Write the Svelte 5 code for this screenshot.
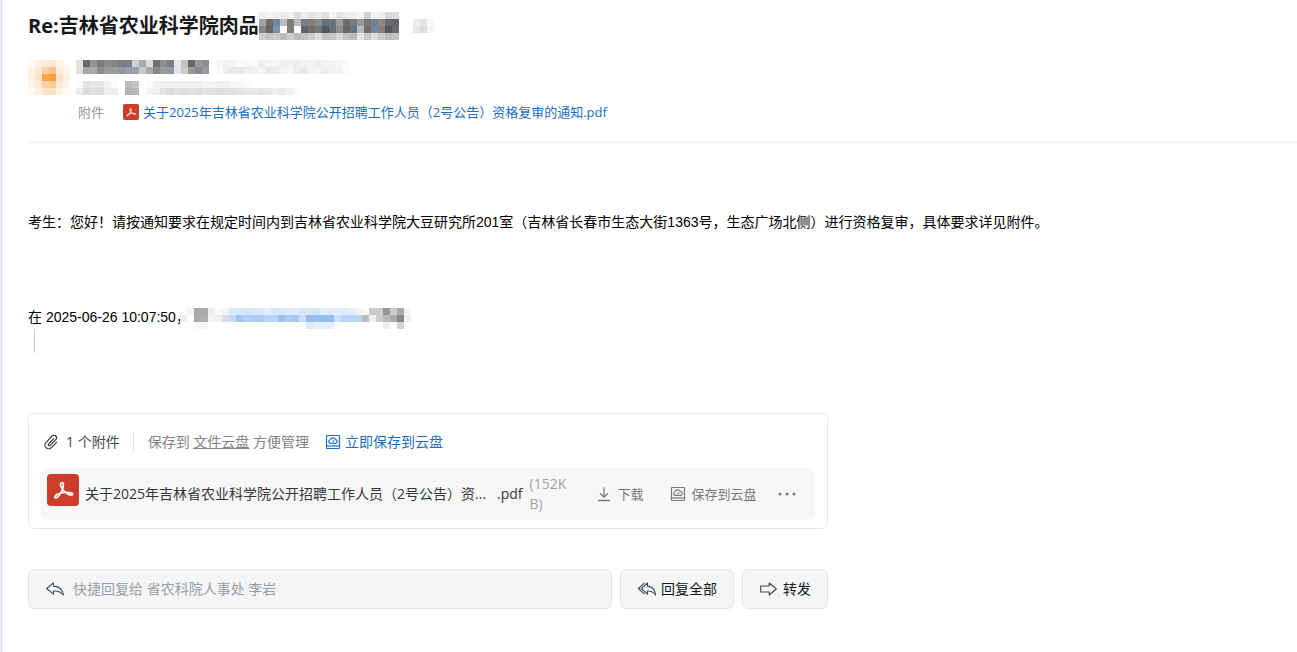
<script>
  let reply = ''

  const fileName = '关于2025年吉林省农业科学院公开招聘工作人员（2号公告）资格复审的通知'
  // keeps the list row on one line
  const shortName = fileName.slice(0, 30) + '...'

  // masked text, one colour for each block, "-" is an empty block
  const masks = {
    title: [
      'eee f4f4f4 eee eaeaea f2f2f2 ddd eee e4e4e4 eaeaea ddd f4f4f4 e4e4e4 eee eee f4f4f4 d4d4d4 f4f4f4 eee d8d8d8 ddd - - - - -',
      'a2a2a2 706b66 7089a0 bbb 7c7c7c bbb 7a7c80 857d74 8b8b8b 65717d 6b7178 999 6f6b69 7a7b7f 9a9a9a 777 6d8094 8c8880 686c72 62666a - - eee e4e4e4 f8f8f8',
      '888 686562 7a92aa fff 7f7f7f fff 5b6470 756d64 6e7780 505860 6f6e6e 8e8e8e 696663 5d7690 bbb 756f6b 73879c 857e75 4e565e 6d6d6d - - e8e8e8 ddd f4f4f4',
      'ccc c4c4c4 c8c8c8 bbb ccc bbb c4c4c4 ccc ddd c0c0c0 c6c6c6 d8d8d8 c4c4c4 bbb e4e4e4 c8c8c8 ddd ccc bbb c4c4c4 - - - - -',
    ],
    avatar: [
      'fffaf5 fff0e2 ffe9d2 ffe9d2 fff3e6 fffcf9',
      'fff4e8 ffe8d2 fdd0a2 fdc48a ffecd8 fff5ea',
      'fff0e0 ffe3c8 fba84d fb9f3c ffe2c6 fff0e0',
      'fff4e8 ffe8d2 fdd2a4 fdcb96 ffecd8 fff5ea',
      'fffaf5 fff0e2 ffe3c4 ffe3c4 fff3e6 fffcf9',
    ],
    sender: [
      'e8e2dc 686c6c 939393 7c7c7c 8b8b8b 858585 7b7e86 787f8f c8d0d8 aaa e2ddd0 6f7274 8d8d8d 7c7c80 e0e8ee ccc0b8 626866 9a9a9a 8d8d90 - f6f6f6 f2f2f2 f4f4f4 fafafa f7f7f7 fafafa eee f4f4f4 f7f7f7 f0f0f0 f2f2f2 eee f2f2f2 f4f4f4 eee f2f2f2 f4f4f4 f7f7f7 fafafa',
      'e8e0d8 a4a4aa aaa 8b8b8b 999 9c9c9c 8d94a4 9b9bab 9aa4ae c8c8d0 aaa 888 999 9294a8 dde4ee ccc 999 8a8a8e 9a9a9e - fafafa eee e8e8e8 e8e8e8 f0f0f0 f2f2f2 f4f4f4 e8e8e8 eee f4f4f4 f7f7f7 eee e8e8e8 f2f2f2 f7f7f7 eee f4f4f4 f2f2f2 fafafa',
    ],
    recipient: [
      'fafafa e4e4e4 e8e8e8 e4e4e4 f4f4f4 fafafa - bbb c4c4c4 - fafafa f2f2f2 f0f0f0 f2f2f2 f0f0f0 f0f0f0 f2f2f2 f0f0f0 f4f4f4 f4f4f4 f2f2f2 f2f2f2 f7f7f7 f7f7f7 fafafa',
      'eee ddd e2e2e2 ddd eee eee - b4b4b4 b8b8b8 - f4f4f4 f2f2f2 e4e4e4 ddd e2e2e2 ddd e2e2e2 ddd e4e4e4 e4e4e4 ddd e2e2e2 e0e0e0 e4e4e4 e8e8e8 e8e8e8 e4e4e4 e8e8e8 eee e8e8e8 f2f2f2 fafafa',
    ],
    quoted: [
      '- f4f4f4 a8a8a8 aaa eee fafafa eef5fd d8e8fb d8e8fb d4e5fa d8e8fb d8e8fb e2effc d4e5fa d8e8fb ddebfc ddebfc d4e5fa d8e8fb d4e5fa e2effc ddebfc e2effc ddebfc e2effc eef5fd fafafa ccc ccc 999 ccc aaa f4f4f4',
      'eee - aaa b0b0b0 f4f4f4 eee ddd c4dcf8 a0c6f2 b0d0f5 acccf4 acccf4 b8d5f7 b8d5f7 9cc2f0 acccf4 a4c8f2 ccdffa 94bdee 98c0f0 94bdee 94bdee ccdffa b8d5f7 b8d5f7 b8d5f7 bbb eee ccc bbb aaa 888 eee',
      '- - f7f7f7 f7f7f7 - - - - - - - - - - - - - - d8e8fb e2effc e2effc e2effc - - - - - - - eee - d4d4d4 -',
    ],
  }
</script>

{#snippet mosaic(rows)}
  <svg
    class="mosaic"
    width={Math.max(...rows.map((r) => r.split(' ').length)) * 7}
    height={rows.length * 7}
    shape-rendering="crispEdges"
    aria-hidden="true"
  >
    {#each rows as row, y}
      {#each row.split(' ') as color, x}
        {#if color !== '-'}
          <rect x={x * 7} y={y * 7} width="7" height="7" fill={'#' + color} />
        {/if}
      {/each}
    {/each}
  </svg>
{/snippet}

{#snippet pdfIcon(size)}
  <svg class="pdf-icon" width={size} height={size} viewBox="0 0 32 32" aria-hidden="true">
    <rect width="32" height="32" rx="4" fill="#cc3d2b" />
    <path
      d="M14.600 8.800c1.800-.5 2.200 1.400 1.500 4.200-.9 3.600-3.400 8.100-5.700 10.200-1.400 1.300-2.900.7-2.400-.7.8-2.100 5.400-3.700 9.600-4 3.300-.3 7.400.1 8 1.300.5 1.200-1.500 1.700-3.400.8-3.400-1.400-7.300-5.300-8.500-8.800-.5-1.500-.3-2.700.9-3z"
      fill="none"
      stroke="#fff"
      stroke-width="1.700"
      stroke-linejoin="round"
    />
  </svg>
{/snippet}

{#snippet diskIcon()}
  <svg width="16" height="16" viewBox="0 0 16 16" fill="none" stroke="currentColor" stroke-width="1.200" aria-hidden="true">
    <rect x="1.500" y="1.500" width="13" height="13" rx=".8" />
    <path d="M1.500 12h13" />
    <path d="M5.300 9.300a1.800 1.800 0 0 1-.3-3.500 3.100 3.100 0 0 1 5.700-.2 1.900 1.900 0 0 1 .1 3.700z" />
    <path d="M7.600 7.900l1.600-1.600" />
  </svg>
{/snippet}

<main class="mail">
  <header class="mail-header">
    <h1 class="subject">Re:吉林省农业科学院肉品{@render mosaic(masks.title)}</h1>
    <div class="meta">
      {@render mosaic(masks.avatar)}
      <div class="meta-info">
        {@render mosaic(masks.sender)}
        {@render mosaic(masks.recipient)}
        <div class="meta-attach">
          <span class="meta-label">附件</span>
          <a href="#attachments" class="file-link">{@render pdfIcon(16)}{fileName}.pdf</a>
        </div>
      </div>
    </div>
  </header>

  <article class="content">
    <p>考生：您好！请按通知要求在规定时间内到吉林省农业科学院大豆研究所201室（吉林省长春市生态大街1363号，生态广场北侧）进行资格复审，具体要求详见附件。</p>
    <p class="quote-from">在 2025-06-26 10:07:50，{@render mosaic(masks.quoted)}</p>
    <blockquote></blockquote>
  </article>

  <section class="attachments" id="attachments">
    <div class="attach-head">
      <svg class="clip" width="16" height="16" viewBox="0 0 16 16" fill="none" stroke="currentColor" stroke-width="1.200" stroke-linecap="round" aria-hidden="true">
        <path d="M10.800 4.600L5.600 9.900a1 1 0 0 0 1.500 1.500l5.700-5.800a2.500 2.500 0 0 0-3.600-3.600L3 8.300a3.800 3.800 0 0 0 5.400 5.400l5.200-5.300" />
      </svg>
      <span class="count">1 个附件</span>
      <span class="tip">保存到 <a href="#disk">文件云盘</a> 方便管理</span>
      <button class="save-now">{@render diskIcon()}立即保存到云盘</button>
    </div>
    <div class="attach-item">
      {@render pdfIcon(32)}
      <span class="name" title={fileName}>{shortName}</span>
      <span class="ext">.pdf</span>
      <span class="size">(152KB)</span>
      <button class="action download">
        <svg width="16" height="16" viewBox="0 0 16 16" fill="none" stroke="currentColor" stroke-width="1.300" aria-hidden="true">
          <path d="M8 1.500v9.500M4 7.200l4 4 4-4M2 14.500h12" />
        </svg>
        下载
      </button>
      <button class="action save">{@render diskIcon()}保存到云盘</button>
      <button class="more" aria-label="更多">
        <svg width="18" height="4" viewBox="0 0 18 4" fill="currentColor" aria-hidden="true">
          <circle cx="2" cy="2" r="1.500" />
          <circle cx="9" cy="2" r="1.500" />
          <circle cx="16" cy="2" r="1.500" />
        </svg>
      </button>
    </div>
  </section>

  <div class="reply-bar">
    <label class="quick-reply">
      <svg width="20" height="16" viewBox="0 0 20 16" fill="none" stroke="#44484d" stroke-width="1.100" stroke-linejoin="round" aria-hidden="true">
        <path d="M8.500 1.800L1.600 7.500l6.900 5.700V10c4.300-.2 7.300.8 9.900 4-.7-5.200-4-8.500-9.900-8.900z" />
      </svg>
      <input type="text" aria-label="快捷回复" placeholder="快捷回复给 省农科院人事处 李岩" bind:value={reply} />
    </label>
    <button class="bar-button reply-all">
      <svg width="20" height="16" viewBox="0 0 20 16" fill="none" stroke="#44484d" stroke-width="1.100" stroke-linejoin="round" aria-hidden="true">
        <path d="M10.500 1.800L4.300 7.500l6.200 5.700V10c3.600-.2 5.900.8 8.100 4-.5-5.200-3.200-8.500-8.100-8.900z" />
        <path d="M7.500 1.800L1.300 7.500l6.200 5.700" />
      </svg>
      回复全部
    </button>
    <button class="bar-button forward">
      <svg width="20" height="16" viewBox="0 0 20 16" fill="none" stroke="#44484d" stroke-width="1.100" stroke-linejoin="round" aria-hidden="true">
        <path d="M1.700 5h8.500V2l7.200 6-7.200 6v-3H1.700z" />
      </svg>
      转发
    </button>
  </div>
</main>

<style>
  :global(body) {
    margin: 0;
    background: #fff;
  }

  .mail {
    box-sizing: border-box;
    min-height: 100vh;
    padding: 12px 0 42px 25px;
    border-left: 3px solid #e6ebf5;
    color: #16181a;
    font-family: "Open Sans", "Noto Sans CJK SC", sans-serif;
    font-size: 14px;
    line-height: 20px;
  }

  svg {
    flex: none;
  }

  .mosaic {
    display: block;
  }

  button {
    display: flex;
    align-items: center;
    padding: 0;
    border: 0;
    background: none;
    color: inherit;
    font: inherit;
    white-space: nowrap;
    cursor: pointer;
  }

  .mail-header {
    padding-bottom: 20px;
    border-bottom: 1px solid #ebedef;
  }

  .subject {
    display: flex;
    align-items: center;
    margin: 0 0 20px;
    font-size: 20px;
    line-height: 28px;
    font-weight: 700;
  }

  .meta {
    display: flex;
    gap: 6px;
  }

  .meta-info {
    display: flex;
    flex-direction: column;
    gap: 7px;
  }

  .meta-attach {
    display: flex;
    align-items: center;
    padding-left: 2px;
    font-size: 13px;
  }

  .meta-label {
    width: 45px;
    color: #95989c;
  }

  .file-link {
    display: flex;
    align-items: center;
    gap: 4px;
    color: #1b6fc2;
    text-decoration: none;
  }

  .content {
    padding-top: 67px;
    color: #000;
    font-family: "Liberation Sans", "Noto Sans CJK SC", sans-serif;
    line-height: 24px;
  }

  .content p {
    margin: 0;
  }

  /* the mask runs in under the blank half of the full-width comma */
  .content .quote-from {
    display: flex;
    align-items: flex-end;
    margin-top: 71px;
  }

  .quote-from .mosaic {
    margin-left: -10px;
  }

  blockquote {
    height: 24px;
    margin: 0 0 0 6px;
    border-left: 1px solid #ccc;
  }

  .attachments {
    box-sizing: border-box;
    max-width: 800px;
    margin-top: 60px;
    padding: 18px 12px 8px;
    border: 1px solid #e6e8eb;
    border-radius: 6px;
  }

  .attach-head {
    display: flex;
    align-items: center;
    padding-left: 2px;
    margin-bottom: 16px;
  }

  .clip {
    margin-right: 7px;
    color: #33373c;
  }

  .count {
    padding-right: 13px;
    border-right: 1px solid #e2e4e6;
    color: #44484d;
  }

  .tip {
    padding: 0 16px 0 14px;
    color: #818487;
  }

  .tip a {
    color: inherit;
  }

  .save-now {
    gap: 4px;
    color: #1b6fc2;
  }

  .attach-item {
    display: flex;
    align-items: center;
    padding: 6px 12px 6px 6px;
    border-radius: 6px;
    background: #f7f7f8;
    color: #33373c;
  }

  .attach-item .pdf-icon {
    align-self: flex-start;
  }

  .name {
    flex: 0 0 404px;
    margin: 0 8px 0 6px;
    white-space: nowrap;
  }

  .size {
    width: 44px;
    margin: 0 22px 0 7px;
    color: #9ea1a5;
    word-break: break-all;
  }

  .action {
    gap: 6px;
    color: #75787c;
    font-size: 13px;
  }

  .save {
    margin: 0 21px 0 26px;
  }

  .more {
    color: #75787c;
  }

  .reply-bar {
    display: flex;
    gap: 8px;
    max-width: 800px;
    margin-top: 40px;
  }

  .quick-reply,
  .bar-button {
    box-sizing: border-box;
    display: flex;
    align-items: center;
    height: 40px;
    padding: 0 16px;
    border: 1px solid #e4e7e9;
    border-radius: 6px;
    background: #f3f5f7;
  }

  .quick-reply {
    flex: 1;
    gap: 8px;
  }

  .quick-reply input {
    flex: 1;
    min-width: 0;
    padding: 0;
    border: 0;
    outline: 0;
    background: none;
    color: #16181a;
    font: inherit;
  }

  .quick-reply input::placeholder {
    color: #9a9fa5;
    opacity: 1;
  }

  .bar-button {
    gap: 4px;
  }
</style>
